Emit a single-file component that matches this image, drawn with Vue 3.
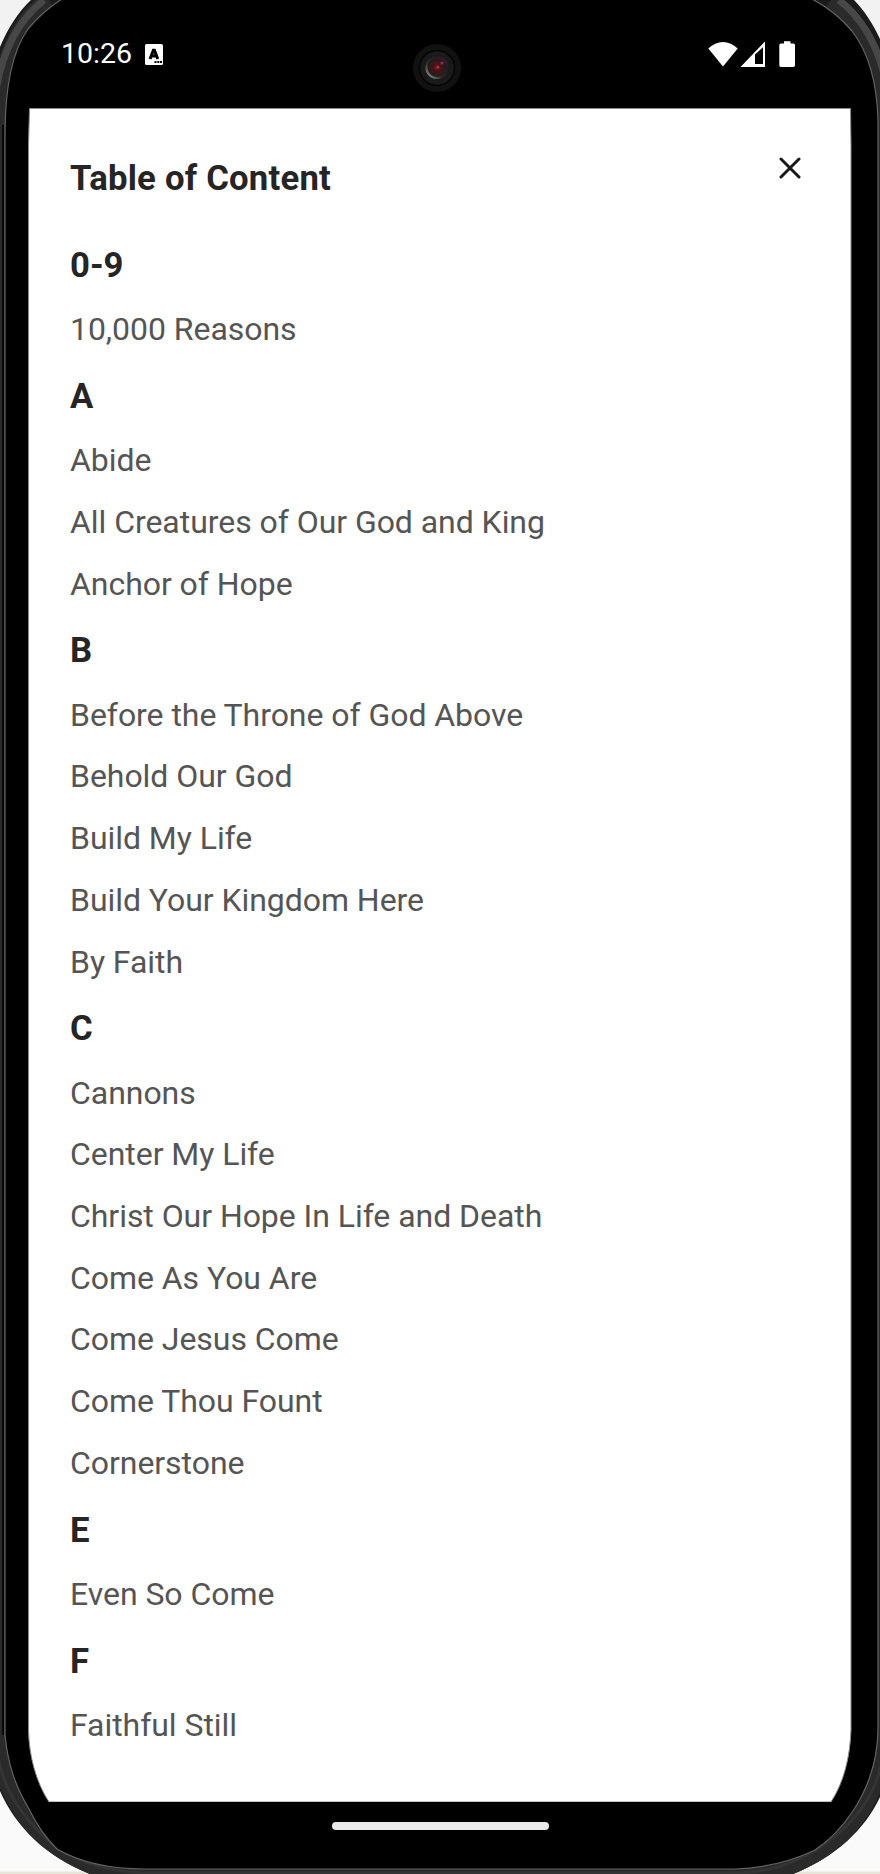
<script setup>
const sections = [
  { letter: '0-9', songs: ['10,000 Reasons'] },
  { letter: 'A', songs: ['Abide', 'All Creatures of Our God and King', 'Anchor of Hope'] },
  { letter: 'B', songs: ['Before the Throne of God Above', 'Behold Our God', 'Build My Life', 'Build Your Kingdom Here', 'By Faith'] },
  { letter: 'C', songs: ['Cannons', 'Center My Life', 'Christ Our Hope In Life and Death', 'Come As You Are', 'Come Jesus Come', 'Come Thou Fount', 'Cornerstone'] },
  { letter: 'E', songs: ['Even So Come'] },
  { letter: 'F', songs: ['Faithful Still'] },
]
</script>

<template>
  <div class="phone">
    <svg class="frame" width="880" height="1874" viewBox="0 0 880 1874" aria-hidden="true">
      <defs>
        <radialGradient id="lens" cx="50%" cy="50%" r="50%">
          <stop offset="0" stop-color="#8a1c2a" />
          <stop offset="0.3" stop-color="#4a121c" />
          <stop offset="0.7" stop-color="#2c1b18" />
          <stop offset="1" stop-color="#1d1d1e" />
        </radialGradient>
        <linearGradient id="glint" x1="0" y1="1" x2="1" y2="0">
          <stop offset="0.1" stop-color="#858585" />
          <stop offset="0.38" stop-color="#3a3a3a" stop-opacity="0.5" />
          <stop offset="0.7" stop-color="#3a1530" stop-opacity="0.3" />
          <stop offset="1" stop-color="#4a1c3c" />
        </linearGradient>
        <clipPath id="body">
          <path d="M31 0C18 12 8 28 0 47V1791C16 1827 45 1856 90 1874H793C836 1857 865 1829 880 1797V39C873 24 864 10 854 0Z" />
        </clipPath>
      </defs>
      <path fill="#1b1b1b" d="M31 0C18 12 8 28 0 47V1791C16 1827 45 1856 90 1874H793C836 1857 865 1829 880 1797V39C873 24 864 10 854 0Z" />
      <g clip-path="url(#body)" fill="none">
        <path stroke="#2a2a2a" stroke-width="17" d="M49 0C18 20 -1 64 -3 125V1740C0 1785 25 1822 56 1848C82 1866 112 1874 142 1877H742C780 1874 811 1861 836 1839C867 1812 882 1777 884 1735V120C881 66 864 25 831 0" />
        <path stroke="#474747" stroke-width="7" d="M44 0C16 22 -1 58 -6 105M839 0C867 22 883 55 889 100" />
        <path stroke="#343434" stroke-width="3" d="M-1 1760C5 1795 29 1826 60 1850C90 1868 120 1872 145 1873H740C780 1871 812 1857 840 1832C863 1812 878 1788 884 1752" />
      </g>
      <path fill="#000" stroke="#646464" stroke-width="1.2" d="M62 -1Q43 11 28 29C13 50 5 82 5 135V1735C8 1766 16 1787 29 1809Q40 1832 57 1849C83 1864 112 1869 145 1869H735C765 1868 790 1862 815 1850C830 1840 843 1826 853 1811C868 1788 878 1760 878 1728V120C877 85 869 53 852 31Q835 11 812 -1Z" />
      <path fill="none" stroke="#070707" stroke-width="2" d="M3 125V1735" />
      <path fill="#fff" stroke="#8a8a8a" stroke-width="1" d="M29.5 108.5H850.5L851 145V1730C850 1757 844 1782 831 1802H49C36 1782 29 1756 28.5 1730V145Z" />
      <path stroke="#000" stroke-width="2" d="M30 1803H850" />

      <circle cx="437" cy="68" r="24" fill="#111112" />
      <circle cx="437" cy="68" r="17.5" fill="#1a1a1b" stroke="#050505" stroke-width="1.5" />
      <circle cx="437" cy="67.5" r="10.5" fill="url(#lens)" stroke="url(#glint)" stroke-width="2.2" />
      <circle cx="438" cy="67" r="1.6" fill="#b52738" />
      <circle cx="442" cy="63" r="1.6" fill="#82305f" />
    </svg>

    <header class="status">
      <span class="time">10:26</span>
      <svg class="badge" width="18" height="21" viewBox="0 0 18 21">
        <rect width="18" height="21" rx="1.6" fill="#fff" />
        <path d="M5 15L8.4 6.2H9.4L12.8 15M6.5 12H11.3" fill="none" stroke="#000" stroke-width="3" />
        <path d="M9.5 17H11.5V19H9.5ZM12.3 17H14.3V19H12.3ZM15 17H17V19H15Z" fill="#000" />
      </svg>
      <svg class="indicators" width="88" height="27" viewBox="0 0 88 27">
        <path d="M0.3 7.6C9 -1.2 21 -1.2 29.7 7.6L15 25.5Z" fill="#fff" />
        <path fill="#fff" fill-rule="evenodd" d="M32.5 26L57 0.5V26ZM47 13.5V23H55V6.2Z" />
        <path d="M76 0.3H82.5V2.5H85.5Q87 2.5 87 4V24.3Q87 26 85.3 26H73Q71.3 26 71.3 24.3V4Q71.3 2.5 73 2.5H76Z" fill="#fff" />
      </svg>
    </header>

    <main class="content">
      <div class="heading-row">
        <h1>Table of Content</h1>
        <button class="close" aria-label="Close">
          <svg width="22" height="22" viewBox="0 0 22 22">
            <path d="M2 2L20 20M20 2L2 20" stroke="#181818" stroke-width="3" stroke-linecap="round" />
          </svg>
        </button>
      </div>
      <section v-for="section in sections" :key="section.letter">
        <h2>{{ section.letter }}</h2>
        <ul>
          <li v-for="song in section.songs" :key="song">{{ song }}</li>
        </ul>
      </section>
    </main>

    <footer class="navigation"><span class="handle"></span></footer>
  </div>
</template>

<style>
body {
  background: #f5f5f5;
}
</style>

<style scoped>
.phone {
  position: relative;
  width: 880px;
  height: 1874px;
  display: flex;
  flex-direction: column;
  overflow: hidden;
  font-family: Roboto, sans-serif;
  background: linear-gradient(#f2f2f2 0, #f2f2f2 900px, #fafafa 901px, #fafafa 1871px, #e8e6da 1872px);
}

.frame {
  position: absolute;
  inset: 0;
}

.status,
.content,
.navigation {
  position: relative;
}

.status {
  box-sizing: border-box;
  height: 108px;
  display: flex;
  align-items: flex-start;
  padding: 36px 84px 0 61px;
}

.time {
  width: 84px;
  color: #fff;
  font-size: 28.5px;
  line-height: 36px;
  white-space: nowrap;
}

.badge {
  margin-top: 8px;
}

.indicators {
  margin: 5px 0 0 auto;
}

.content {
  height: 1694px;
  box-sizing: border-box;
  padding: 0 70px;
}

.heading-row {
  height: 121.5px;
  display: flex;
  justify-content: space-between;
  align-items: flex-start;
}

h1,
h2 {
  margin: 0;
  color: #252525;
  font-weight: 700;
  font-size: 34.7px;
}

h1 {
  padding-top: 49.5px;
  line-height: 40px;
  letter-spacing: 0.22px;
}

h2 {
  height: 69.5px;
  line-height: 71px;
}

ul {
  margin: 0;
  padding: 0;
  list-style: none;
}

li {
  height: 61.69px;
  color: #555;
  font-size: 32px;
  line-height: 61.75px;
  letter-spacing: -0.05px;
  white-space: nowrap;
}

.close {
  display: flex;
  margin: 49px 9px 0 0;
  padding: 0;
  border: 0;
  background: none;
}

.navigation {
  display: flex;
  justify-content: center;
  height: 72px;
}

.handle {
  width: 217px;
  height: 8px;
  margin-top: 20px;
  border-radius: 4px;
  background: #e9e9e9;
}
</style>
